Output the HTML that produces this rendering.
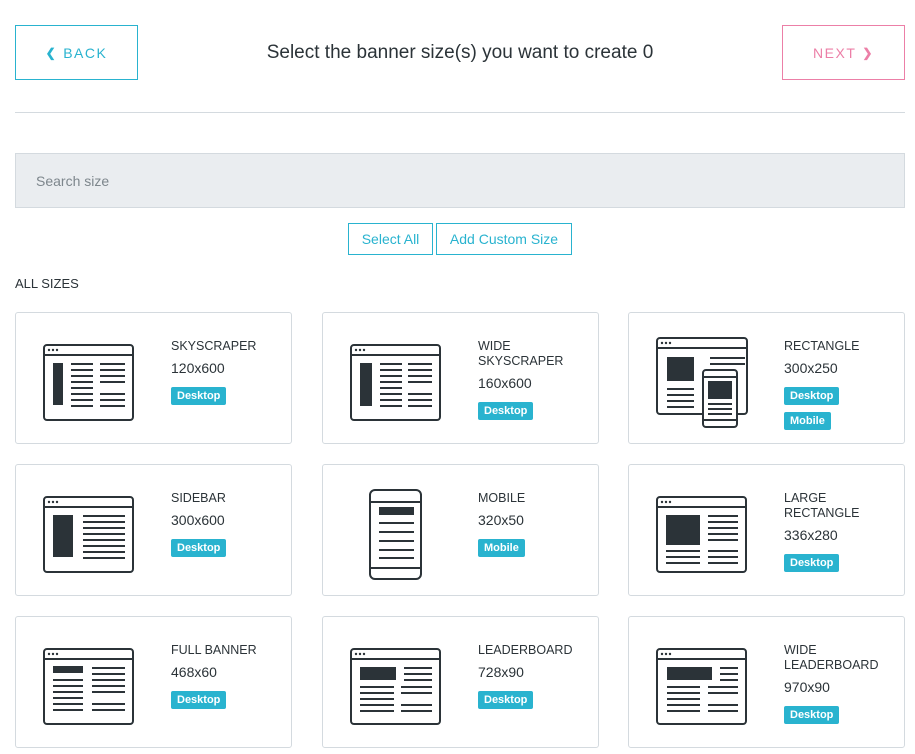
<!DOCTYPE html>
<html><head><meta charset="utf-8">
<style>
*{box-sizing:border-box;margin:0;padding:0}
body{width:915px;height:754px;background:#fff;font-family:"Liberation Sans",sans-serif;color:#2b3338;position:relative;overflow:hidden}
.btn{position:absolute;border:1px solid #29b3cf;display:flex;align-items:center;justify-content:center;font-size:14px;letter-spacing:1.5px}
.title{position:absolute;left:138px;width:644px;top:42px;text-align:center;font-size:19px;color:#2b3338}
.hr{position:absolute;left:15px;width:890px;top:112px;height:1px;background:#d4dadf}
.search{position:absolute;left:15px;top:153px;width:890px;height:55px;background:#eaedf0;border:1px solid #d4dadf;font-size:14px;color:#7d868c;padding:19px 20px}
.sb{position:absolute;top:223px;height:32px;border:1px solid #29b3cf;color:#29b3cf;font-size:14px;display:flex;align-items:center;justify-content:center}
.all{position:absolute;left:15px;top:276px;font-size:13px}
.card{position:absolute;width:277px;height:132px;border:1px solid #d4dadf;border-radius:3px}
.card svg{position:absolute;left:-1px;top:-1px}
.txt{position:absolute;left:155px;top:26px;font-size:12.5px;line-height:15px}
.sz{margin-top:7px;font-size:14px}
.bd{display:inline-block;background:#29b3cf;color:#fff;font-weight:bold;font-size:11px;padding:3px 6px;border-radius:2px;margin-top:11px;line-height:12px}
.bd2{display:block;width:max-content}
</style></head><body>
<div class="btn" style="left:15px;top:25px;width:123px;height:55px;color:#29b3cf"><span style="font-size:12px;font-weight:bold;margin-right:6px">&#10094;</span>BACK</div>
<div class="title">Select the banner size(s) you want to create 0</div>
<div class="btn" style="left:782px;top:25px;width:123px;height:55px;border-color:#ec7fa7;color:#ec7fa7">NEXT<span style="font-size:12px;font-weight:bold;margin-left:6px">&#10095;</span></div>
<div class="hr"></div>
<div class="search">Search size</div>
<div class="sb" style="left:348px;width:85px">Select All</div>
<div class="sb" style="left:436px;width:136px">Add Custom Size</div>
<div class="all">ALL SIZES</div>

<div class="card" style="left:15px;top:312px">
<svg width="277" height="132" fill="none" stroke="#2b3338" stroke-width="2">
<rect x="29" y="33" width="89" height="75" rx="3"/><line x1="29" y1="43" x2="118" y2="43"/>
<g fill="#2b3338" stroke="none"><circle cx="34" cy="38" r="1.2"/><circle cx="38" cy="38" r="1.2"/><circle cx="42" cy="38" r="1.2"/><rect x="38" y="51" width="10" height="42"/></g>
<path d="M56 52h22M56 58h22M56 64h22M56 70h22M56 76h22M56 82h22M56 88h22M56 94h22M85 52h25M85 58h25M85 64h25M85 70h25M85 82h25M85 88h25M85 94h25"/>
</svg>
<div class="txt">SKYSCRAPER<div class="sz">120x600</div><span class="bd">Desktop</span></div></div>

<div class="card" style="left:322px;top:312px">
<svg width="277" height="132" fill="none" stroke="#2b3338" stroke-width="2">
<rect x="29" y="33" width="89" height="75" rx="3"/><line x1="29" y1="43" x2="118" y2="43"/>
<g fill="#2b3338" stroke="none"><circle cx="34" cy="38" r="1.2"/><circle cx="38" cy="38" r="1.2"/><circle cx="42" cy="38" r="1.2"/><rect x="38" y="51" width="12" height="43"/></g>
<path d="M58 52h22M58 58h22M58 64h22M58 70h22M58 76h22M58 82h22M58 88h22M58 94h22M86 52h24M86 58h24M86 64h24M86 70h24M86 82h24M86 88h24M86 94h24"/>
</svg>
<div class="txt">WIDE<br>SKYSCRAPER<div class="sz">160x600</div><span class="bd">Desktop</span></div></div>

<div class="card" style="left:628px;top:312px">
<svg width="277" height="132" fill="none" stroke="#2b3338" stroke-width="2">
<path d="M75 102H32a3 3 0 0 1-3-3V29a3 3 0 0 1 3-3h84a3 3 0 0 1 3 3v70a3 3 0 0 1-3 3h-7"/><line x1="29" y1="36" x2="119" y2="36"/>
<g fill="#2b3338" stroke="none"><circle cx="34" cy="31" r="1.2"/><circle cx="38" cy="31" r="1.2"/><circle cx="42" cy="31" r="1.2"/><rect x="39" y="45" width="27" height="24"/></g>
<path d="M39 77h27M39 83h27M39 89h27M39 95h27M82 46h35M82 52h35"/>
<rect x="75" y="58" width="34" height="57" rx="3" fill="#fff"/>
<line x1="75" y1="65" x2="109" y2="65"/><line x1="75" y1="108" x2="109" y2="108"/>
<rect x="80" y="69" width="24" height="18" fill="#2b3338" stroke="none"/>
<path d="M80 92h24M80 97h24M80 102h24"/>
</svg>
<div class="txt">RECTANGLE<div class="sz">300x250</div><span class="bd bd2">Desktop</span><span class="bd bd2" style="margin-top:7px">Mobile</span></div></div>

<div class="card" style="left:15px;top:464px">
<svg width="277" height="132" fill="none" stroke="#2b3338" stroke-width="2">
<rect x="29" y="33" width="89" height="75" rx="3"/><line x1="29" y1="43" x2="118" y2="43"/>
<g fill="#2b3338" stroke="none"><circle cx="34" cy="38" r="1.2"/><circle cx="38" cy="38" r="1.2"/><circle cx="42" cy="38" r="1.2"/><rect x="38" y="51" width="20" height="42"/></g>
<path d="M68 52h42M68 58h42M68 64h42M68 70h42M68 76h42M68 82h42M68 88h42M68 94h42"/>
</svg>
<div class="txt">SIDEBAR<div class="sz">300x600</div><span class="bd">Desktop</span></div></div>

<div class="card" style="left:322px;top:464px">
<svg width="277" height="132" fill="none" stroke="#2b3338" stroke-width="2">
<rect x="48" y="26" width="51" height="89" rx="5"/><line x1="48" y1="38" x2="99" y2="38"/><line x1="48" y1="104" x2="99" y2="104"/>
<rect x="57" y="43" width="35" height="8" fill="#2b3338" stroke="none"/>
<path d="M57 59h35M57 68h35M57 77h35M57 86h35M57 94h35"/>
</svg>
<div class="txt">MOBILE<div class="sz">320x50</div><span class="bd">Mobile</span></div></div>

<div class="card" style="left:628px;top:464px">
<svg width="277" height="132" fill="none" stroke="#2b3338" stroke-width="2">
<rect x="29" y="33" width="89" height="75" rx="3"/><line x1="29" y1="43" x2="118" y2="43"/>
<g fill="#2b3338" stroke="none"><circle cx="34" cy="38" r="1.2"/><circle cx="38" cy="38" r="1.2"/><circle cx="42" cy="38" r="1.2"/><rect x="38" y="51" width="34" height="30"/></g>
<path d="M80 52h30M80 58h30M80 64h30M80 70h30M80 76h30M38 87h34M38 93h34M38 99h34M80 87h30M80 93h30M80 99h30"/>
</svg>
<div class="txt">LARGE<br>RECTANGLE<div class="sz">336x280</div><span class="bd">Desktop</span></div></div>

<div class="card" style="left:15px;top:616px">
<svg width="277" height="132" fill="none" stroke="#2b3338" stroke-width="2">
<rect x="29" y="33" width="89" height="75" rx="3"/><line x1="29" y1="43" x2="118" y2="43"/>
<g fill="#2b3338" stroke="none"><circle cx="34" cy="38" r="1.2"/><circle cx="38" cy="38" r="1.2"/><circle cx="42" cy="38" r="1.2"/><rect x="38" y="50" width="30" height="7"/></g>
<path d="M38 64h30M38 70h30M38 76h30M38 82h30M38 88h30M38 94h30M77 52h33M77 58h33M77 64h33M77 70h33M77 76h33M77 88h33M77 94h33"/>
</svg>
<div class="txt">FULL BANNER<div class="sz">468x60</div><span class="bd">Desktop</span></div></div>

<div class="card" style="left:322px;top:616px">
<svg width="277" height="132" fill="none" stroke="#2b3338" stroke-width="2">
<rect x="29" y="33" width="89" height="75" rx="3"/><line x1="29" y1="43" x2="118" y2="43"/>
<g fill="#2b3338" stroke="none"><circle cx="34" cy="38" r="1.2"/><circle cx="38" cy="38" r="1.2"/><circle cx="42" cy="38" r="1.2"/><rect x="38" y="51" width="36" height="13"/></g>
<path d="M82 52h28M82 58h28M82 64h28M38 71h34M38 77h34M38 83h34M38 89h34M38 95h34M79 71h31M79 77h31M79 89h31M79 95h31"/>
</svg>
<div class="txt">LEADERBOARD<div class="sz">728x90</div><span class="bd">Desktop</span></div></div>

<div class="card" style="left:628px;top:616px">
<svg width="277" height="132" fill="none" stroke="#2b3338" stroke-width="2">
<rect x="29" y="33" width="89" height="75" rx="3"/><line x1="29" y1="43" x2="118" y2="43"/>
<g fill="#2b3338" stroke="none"><circle cx="34" cy="38" r="1.2"/><circle cx="38" cy="38" r="1.2"/><circle cx="42" cy="38" r="1.2"/><rect x="39" y="51" width="45" height="13"/></g>
<path d="M92 52h18M92 58h18M92 64h18M39 71h33M39 77h33M39 83h33M39 89h33M39 95h33M80 71h30M80 77h30M80 89h30M80 95h30"/>
</svg>
<div class="txt">WIDE<br>LEADERBOARD<div class="sz">970x90</div><span class="bd">Desktop</span></div></div>
</body></html>
